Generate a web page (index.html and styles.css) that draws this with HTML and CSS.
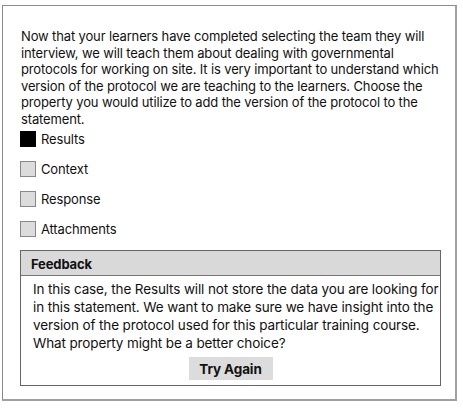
FILE: index.html
```html
<!DOCTYPE html>
<html>
<head>
<meta charset="utf-8">
<link rel="stylesheet" href="styles.css">
</head>
<body>
<div class="card">
  <p class="prompt">Now that your learners have completed selecting the team they will<br>interview, we will teach them about dealing with governmental<br>protocols for working on site. It is very important to understand which<br>version of the protocol we are teaching to the learners. Choose the<br>property you would utilize to add the version of the protocol to the<br>statement.</p>
  <ul class="options">
    <li class="option"><span class="box checked"></span><span>Results</span></li>
    <li class="option"><span class="box"></span><span>Context</span></li>
    <li class="option"><span class="box"></span><span>Response</span></li>
    <li class="option"><span class="box"></span><span>Attachments</span></li>
  </ul>
  <div class="feedback">
    <div class="fb-head">Feedback</div>
    <div class="fb-body">
      <p>In this case, the Results will not store the data you are looking for<br>in this statement. We want to make sure we have insight into the<br>version of the protocol used for this particular training course.<br>What property might be a better choice?</p>
      <div class="actions"><button class="btn">Try Again</button></div>
    </div>
  </div>
</div>
</body>
</html>
```
FILE: styles.css
```css
html, body { margin: 0; padding: 0; background: #fff; }
body { font-family: Inter, "Noto Sans", sans-serif; color: #111; font-size: 13px; letter-spacing: -0.14px; }
.card {
  margin: 5px 0 0 2px;
  width: 455px;
  height: 396px;
  box-sizing: border-box;
  border: 1px solid #8a8a8a;
  border-right-width: 2px;
  border-bottom-width: 2px;
  border-right-color: #a0a0a0;
  border-bottom-color: #a0a0a0;
  padding: 22px 14px 0 17px;
}
.prompt { margin: 0 0 0 1px; line-height: 16.5px; white-space: nowrap; }
.options {
  list-style: none; margin: 4px 0 0 0; padding: 0;
  display: flex; flex-direction: column; gap: 15px;
}
.option { display: flex; align-items: center; height: 15px; gap: 5px; }
.box {
  width: 14px; height: 14px;
  background: #dcdcdc;
  border: 1px solid #888;
  display: inline-block;
}
.box.checked { background: #000; border-color: #000; }
.feedback {
  margin-top: 14px;
  border: 1px solid #666;
}
.fb-head {
  background: #d9d9d9;
  font-weight: 700;
  padding: 0 10px;
  height: 24px;
  line-height: 26px;
  border-bottom: 1px solid #777;
}
.fb-body { padding: 4px 0 5px 12px; }
.fb-body p { margin: 0; font-size: 13.5px; letter-spacing: -0.13px; line-height: 18px; white-space: nowrap; }
.actions { display: flex; justify-content: center; margin-top: 5px; padding-right: 12px; }
.btn {
  font-family: Inter, "Noto Sans", sans-serif;
  font-size: 13.5px; font-weight: 700; color: #111; letter-spacing: -0.13px;
  background: #dcdcdc; border: none;
  width: 84px; height: 23px; padding: 0;
}
```
